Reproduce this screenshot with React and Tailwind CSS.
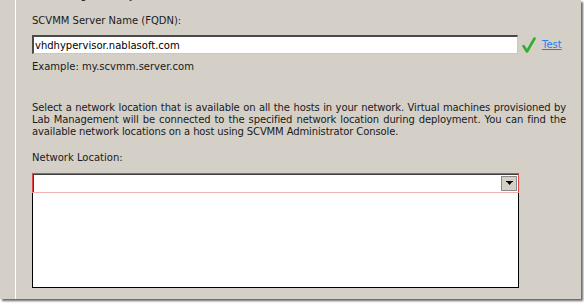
export default function App() {
  const font = { fontFamily: '"DejaVu Sans", Tahoma, sans-serif' };

  return (
    <div className="w-[584px] h-[305px] bg-white overflow-hidden" style={font}>
      {/* dialog panel */}
      <div className="w-[581px] h-[299px] bg-[#d4d0c8] flex shadow-[2px_2px_2px_rgba(0,0,0,0.6)] overflow-hidden">
        <div className="w-[15px] shrink-0" />
        <div className="w-px bg-white shrink-0" />

        <div className="flex-1 pl-4 flex flex-col text-[10px] text-[#1a1a1a]">
          {/* clipped line from above */}
          <div className="-mt-[11px] h-[13px] leading-[13px] whitespace-nowrap">
            Lab Management by
          </div>

          <div className="mt-[12px] h-[13px] leading-[13px]">SCVMM Server Name (FQDN):</div>

          {/* server name input + test */}
          <div className="mt-[8px] flex items-center h-[19px]">
            <div className="w-[486px] h-[19px] border-t-2 border-l-2 border-b border-r border-t-[#4a4a4a] border-l-[#4a4a4a] border-b-[#c8c8c8] border-r-[#c8c8c8] bg-white flex items-center pl-[1px] leading-[13px] text-black">
              vhdhypervisor.nablasoft.com
            </div>
            <svg width="16" height="18" viewBox="0 0 16 18" className="ml-[3px]">
              <path d="M2.5 10 L6 15.5 L13.5 2.5" fill="none" stroke="#2fae2f" strokeWidth="2.6" strokeLinecap="round" strokeLinejoin="round" />
            </svg>
            <a href="#" className="ml-[5px] text-[#2b7de9] underline leading-[13px]">Test</a>
          </div>

          <div className="mt-[6px] h-[13px] leading-[13px]">Example: my.scvmm.server.com</div>

          {/* description */}
          <div className="mt-[29px] w-[534px] leading-[12px] text-justify tracking-[-0.12px]">
            <div className="[text-align-last:justify] whitespace-nowrap">
              Select a network location that is available on all the hosts in your network. Virtual machines provisioned by
            </div>
            <div className="[text-align-last:justify] whitespace-nowrap">
              Lab Management will be connected to the specified network location during deployment. You can find the
            </div>
            <div className="whitespace-nowrap">
              available network locations on a host using SCVMM Administrator Console.
            </div>
          </div>

          <div className="mt-[13px] h-[13px] leading-[13px]">Network Location:</div>

          {/* combo box with validation border */}
          <div className="mt-[9px] w-[487px]">
            <div className="h-[20px] border border-[#e04646] border-b-[#f0b4b4]">
              <div className="h-full border-t border-l border-t-[#404040] border-l-[#404040] bg-white flex justify-end items-center pr-[1px]">
                <div className="w-[16px] h-[15px] bg-[#d4d0c8] border border-[#8a8a8a] flex items-center justify-center">
                  <svg width="7" height="5" viewBox="0 0 7 5">
                    <path d="M0 0 H7 V1 H6 L3.5 4 L1 1 H0 Z" fill="#000" />
                  </svg>
                </div>
              </div>
            </div>
            <div className="w-[487px] h-[95px] bg-white border border-black border-t-0" />
          </div>
        </div>
      </div>
    </div>
  );
}
